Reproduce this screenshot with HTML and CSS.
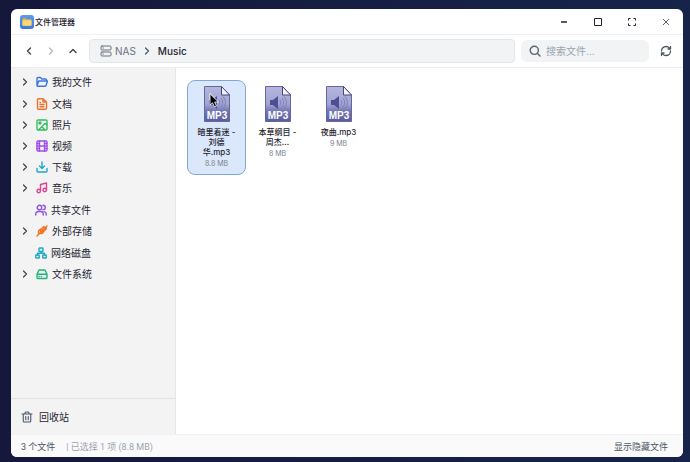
FILE: index.html
```html
<!DOCTYPE html>
<html lang="zh-CN">
<head>
    <meta charset="UTF-8">
    <title>文件管理器</title>
    <link rel="stylesheet" href="styles.css">
</head>
<body>
    <svg class="sprite" width="0" height="0">
        <defs>
            <linearGradient id="pageFill" x1="0" y1="0" x2="0" y2="1">
                <stop offset="0" stop-color="#b4b6dc"/>
                <stop offset="0.5" stop-color="#a3a5d2"/>
                <stop offset="0.7" stop-color="#7376b4"/>
                <stop offset="1" stop-color="#5a5c9c"/>
            </linearGradient>
            <linearGradient id="appFill" x1="0" y1="0" x2="0" y2="1">
                <stop offset="0" stop-color="#5b9bf0"/>
                <stop offset="1" stop-color="#3c78dc"/>
            </linearGradient>
        </defs>
        <symbol id="chevron" viewBox="0 0 12 12">
            <path d="M4.5 3 L7.5 6 L4.5 9"/>
        </symbol>
        <symbol id="page" viewBox="0 0 26 36">
            <path d="M0.5 0.5 H17.5 L25.5 9 V35.5 H0.5 Z" fill="url(#pageFill)" stroke="#6567a0"/>
            <path d="M17.5 0.5 V9 H25.5 Z" fill="#f4f4fc" stroke="#45477f"/>
            <path d="M5 14 H8 L13 10 V23 L8 19 H5 Z" fill="#4c4f94" stroke="none"/>
            <path d="M15 14 Q17 16.500 15 19 M17 12 Q20.500 16.500 17 21 M19 10.500 Q24 16.500 19 22.500" fill="none" stroke="#7c7fbb"/>
        </symbol>
    </svg>

    <div class="window">
        <header class="titlebar">
            <svg class="app-icon" viewBox="0 0 14 14">
                <rect width="14" height="14" rx="3" fill="url(#appFill)"/>
                <path d="M2.500 4 Q2.500 3.300 3.200 3.300 H5.500 L6.500 4.300 H10.800 Q11.500 4.300 11.500 5 V10 Q11.500 10.700 10.800 10.700 H3.200 Q2.500 10.700 2.500 10 Z" fill="#e9b23c"/>
                <rect x="2.500" y="5.300" width="9" height="5.400" rx="0.700" fill="#fbd978"/>
            </svg>
            <h1 class="title">文件管理器</h1>
            <div class="window-controls">
                <button type="button" aria-label="最小化"><svg viewBox="0 0 12 12"><path d="M3 6 H9" stroke-width="1.500"/></svg></button>
                <button type="button" aria-label="最大化"><svg viewBox="0 0 12 12"><path d="M2.500 2.500 H9.500 V9.500 H2.500 Z"/></svg></button>
                <button type="button" aria-label="全屏"><svg viewBox="0 0 12 12"><path d="M2.500 4.500 V2.500 H4.500 M7.500 2.500 H9.500 V4.500 M9.500 7.500 V9.500 H7.500 M4.500 9.500 H2.500 V7.500"/></svg></button>
                <button type="button" class="close" aria-label="关闭"><svg viewBox="0 0 12 12"><path d="M3 3 L9 9 M9 3 L3 9"/></svg></button>
            </div>
        </header>

        <div class="toolbar">
            <div class="nav-buttons">
                <button type="button" aria-label="后退"><svg viewBox="0 0 12 12"><path d="M7.500 3 L4.500 6 L7.500 9"/></svg></button>
                <button type="button" aria-label="前进" disabled><svg viewBox="0 0 12 12"><path d="M4.500 3 L7.500 6 L4.500 9"/></svg></button>
                <button type="button" aria-label="上一级"><svg viewBox="0 0 12 12"><path d="M3 7.500 L6 4.500 L9 7.500"/></svg></button>
            </div>
            <nav class="address">
                <svg class="server" viewBox="0 0 12 12"><rect x="1" y="1" width="10" height="4" rx="1"/><rect x="1" y="7" width="10" height="4" rx="1"/><path d="M3 3 H3.500 M3 9 H3.500"/></svg>
                <a href="#" class="crumb">NAS</a>
                <svg class="crumb-arrow"><use href="#chevron"/></svg>
                <a href="#" class="crumb current">Music</a>
            </nav>
            <label class="search">
                <svg viewBox="0 0 12 12"><circle cx="5.300" cy="5.300" r="4.100"/><path d="M8.300 8.300 L11 11"/></svg>
                <input type="text" placeholder="搜索文件..." aria-label="搜索文件">
            </label>
            <button type="button" class="refresh" aria-label="刷新">
                <svg viewBox="0 0 24 24"><path d="M3 12 a9 9 0 0 1 9-9 9.750 9.750 0 0 1 6.740 2.740 L21 8 M21 3 v5 h-5 M21 12 a9 9 0 0 1-9 9 9.750 9.750 0 0 1-6.740-2.740 L3 16 M8 16 H3 v5"/></svg>
            </button>
        </div>

        <div class="main">
            <aside class="sidebar">
                <nav class="tree">
                    <div class="group">
                        <button type="button" class="node blue"><svg class="arrow"><use href="#chevron"/></svg><svg class="icon" viewBox="0 0 24 24"><path d="M2 19 V5 a2 2 0 0 1 2-2 h5 l3 3 h7 a2 2 0 0 1 2 2 v2 M2 19 l3.500-9 H23 l-3 9 a2 2 0 0 1-2 1.500 H4 a2 2 0 0 1-2-1.500"/></svg>我的文件</button>
                    </div>
                    <div class="group">
                        <button type="button" class="node orange"><svg class="arrow"><use href="#chevron"/></svg><svg class="icon" viewBox="0 0 24 24"><path d="M14 1.500 H5 a2 2 0 0 0-2 2 v17 a2 2 0 0 0 2 2 h14 a2 2 0 0 0 2-2 V8 Z M14 2 v6 h6 M8 9 h1 M8 13 h8 M8 17.500 h8"/></svg>文档</button>
                        <button type="button" class="node green"><svg class="arrow"><use href="#chevron"/></svg><svg class="icon" viewBox="0 0 24 24"><rect x="2" y="2" width="20" height="20" rx="2"/><circle cx="8" cy="8" r="2"/><path d="M22 11 l-4-2 L5 22 M13 17 l4 4"/></svg>照片</button>
                        <button type="button" class="node purple"><svg class="arrow"><use href="#chevron"/></svg><svg class="icon" viewBox="0 0 24 24"><rect x="2" y="2" width="20" height="20" rx="2"/><path d="M7 2 v20 M17 2 v20 M2 7 h5 M2 12 h20 M2 17 h5 M17 7 h5 M17 17 h5"/></svg>视频</button>
                        <button type="button" class="node cyan"><svg class="arrow"><use href="#chevron"/></svg><svg class="icon" viewBox="0 0 24 24"><path d="M2 15 v5 a2 2 0 0 0 2 2 h16 a2 2 0 0 0 2-2 v-5 M7 10 l5 5 5-5 M12 15 V2"/></svg>下载</button>
                        <button type="button" class="node pink"><svg class="arrow"><use href="#chevron"/></svg><svg class="icon" viewBox="0 0 24 24"><path d="M9 18 V5 l12-3 v14"/><circle cx="5.500" cy="18" r="3.500"/><circle cx="17.500" cy="16" r="3.500"/></svg>音乐</button>
                    </div>
                    <div class="group">
                        <button type="button" class="node leaf violet"><svg class="icon" viewBox="0 0 24 24"><circle cx="9" cy="7" r="4.500"/><path d="M1.500 22 v-2 a5 5 0 0 1 5-5 h5 a5 5 0 0 1 5 5 v2 M16 2.500 a4.500 4.500 0 0 1 0 9 M22.500 22 v-2 a5 5 0 0 0-4-4.800"/></svg>共享文件</button>
                        <button type="button" class="node amber"><svg class="arrow"><use href="#chevron"/></svg><svg class="icon" viewBox="0 0 24 24"><path d="M2 22 L22 2 M5 18 V12 L9 8 V14 M7 17 H12 L16 13 H11 M12 10 V6 L16 3 V8 M14 10 H19 L21 6"/></svg>外部存储</button>
                    </div>
                    <div class="group">
                        <button type="button" class="node leaf teal"><svg class="icon" viewBox="0 0 24 24"><rect x="8" y="2" width="8" height="7" rx="1"/><rect x="1.500" y="16" width="7" height="6" rx="1"/><rect x="15.500" y="16" width="7" height="6" rx="1"/><path d="M5 16 v-3.500 h14 V16 M12 9 v3.500"/></svg>网络磁盘</button>
                        <button type="button" class="node emerald"><svg class="arrow"><use href="#chevron"/></svg><svg class="icon" viewBox="0 0 24 24"><path d="M22 12.500 H2 M6 4 h12 l4 8.500 V19 a2 2 0 0 1-2 2 H4 a2 2 0 0 1-2-2 v-6.500 Z M6 17 h0.500 M10.500 17 h0.500"/></svg>文件系统</button>
                    </div>
                </nav>
                <button type="button" class="trash">
                    <svg viewBox="0 0 24 24"><path d="M2 6 h20 M19.500 6 v14 a2 2 0 0 1-2 2 h-11 a2 2 0 0 1-2-2 V6 M8 6 V4 a2 2 0 0 1 2-2 h4 a2 2 0 0 1 2 2 v2 M9.500 11 v6.500 M14.500 11 v6.500"/></svg>
                    回收站
                </button>
            </aside>

            <main class="files">
                <button type="button" class="file selected">
                    <svg class="file-icon" viewBox="0 0 26 36"><use href="#page"/><text x="13" y="33" text-anchor="middle" class="file-type">MP3</text></svg>
                    <span class="file-name">暗里着迷 - 刘德华.mp3</span>
                    <span class="file-size">8.8 MB</span>
                    <svg class="pointer" viewBox="0 0 10 15"><path d="M1 1 V12 L3.500 9.800 L5.500 14 L7.500 13 L5.600 9 H9 Z" fill="#000" stroke="#fff" stroke-width="0.800"/></svg>
                </button>
                <button type="button" class="file">
                    <svg class="file-icon" viewBox="0 0 26 36"><use href="#page"/><text x="13" y="33" text-anchor="middle" class="file-type">MP3</text></svg>
                    <span class="file-name">本草纲目 - 周杰...</span>
                    <span class="file-size">8 MB</span>
                </button>
                <button type="button" class="file">
                    <svg class="file-icon" viewBox="0 0 26 36"><use href="#page"/><text x="13" y="33" text-anchor="middle" class="file-type">MP3</text></svg>
                    <span class="file-name">夜曲.mp3</span>
                    <span class="file-size">9 MB</span>
                </button>
            </main>
        </div>

        <footer class="statusbar">
            <span>3 个文件</span>
            <span class="selection">| 已选择 1 项 (8.8 MB)</span>
            <button type="button" class="toggle-hidden">显示隐藏文件</button>
        </footer>
    </div>
</body>
</html>
```
FILE: styles.css
```css
* {
    box-sizing: border-box;
}

body {
    margin: 0;
    min-height: 100vh;
    padding: 9px 7px 5px 11px;
    display: flex;
    background: linear-gradient(to right, #15183a, #16244a);
    font-family: Inter, "Noto Sans CJK SC", sans-serif;
    font-size: 10px;
    color: #1f2430;
}

button {
    border: none;
    padding: 0;
    background: none;
    font: inherit;
    color: inherit;
    cursor: pointer;
}

svg {
    flex: none;
    fill: none;
    stroke: currentColor;
    stroke-linecap: round;
    stroke-linejoin: round;
}

.sprite {
    position: absolute;
}

.window {
    flex: 1;
    display: flex;
    flex-direction: column;
    background: #fff;
    border-radius: 6px;
    overflow: hidden;
}

/* Title bar */
.titlebar {
    display: flex;
    align-items: center;
    height: 26px;
    padding-left: 9px;
    border-bottom: 1px solid #f0f0f2;
}

.app-icon {
    width: 14px;
    height: 14px;
    margin-right: 1px;
    stroke: none;
}

.title {
    flex: 1;
    margin: 0;
    font-size: 8px;
    font-weight: 500;
}

.window-controls {
    display: flex;
}

.window-controls button {
    display: flex;
    align-items: center;
    justify-content: center;
    width: 34px;
    height: 25px;
}

.window-controls svg {
    width: 12px;
    height: 12px;
    stroke-linecap: butt;
}

.window-controls .close {
    color: #5c616b;
}

/* Toolbar */
.toolbar {
    display: flex;
    align-items: center;
    height: 33px;
    padding: 0 11px 0 7px;
    border-bottom: 1px solid #ececef;
}

.nav-buttons {
    display: flex;
    margin-right: 5px;
}

.nav-buttons button {
    display: flex;
    align-items: center;
    justify-content: center;
    width: 22px;
    height: 22px;
    color: #3d424d;
}

.nav-buttons button:disabled {
    color: #b4b7be;
}

.nav-buttons svg {
    width: 12px;
    height: 12px;
    stroke-width: 1.4;
}

.address {
    flex: 1;
    display: flex;
    align-items: center;
    height: 24px;
    padding-left: 10px;
    background: #f1f3f5;
    border: 1px solid #e2e5e9;
    border-radius: 4px;
}

.server {
    width: 12px;
    height: 12px;
    margin-right: 3px;
    color: #6b7280;
}

.crumb {
    color: #6b7280;
    text-decoration: none;
}

.crumb.current {
    color: #1f2430;
    font-weight: 500;
}

.crumb-arrow {
    width: 12px;
    height: 12px;
    margin: 0 5px;
    color: #4b5563;
    stroke-width: 1.2;
}

.search {
    display: flex;
    align-items: center;
    width: 128px;
    height: 22px;
    margin-left: 6px;
    padding: 0 8px;
    background: #f1f3f5;
    border-radius: 6px;
}

.search svg {
    width: 12px;
    height: 12px;
    margin-right: 5px;
    color: #5c6370;
    stroke-width: 1.4;
}

.search input {
    flex: 1;
    min-width: 0;
    padding: 0;
    border: none;
    outline: none;
    background: none;
    font: inherit;
    color: inherit;
}

.search input::placeholder {
    color: #9ca3af;
}

.refresh {
    display: flex;
    margin-left: 11px;
    color: #4b5563;
}

.refresh svg {
    width: 12px;
    height: 12px;
    stroke-width: 2.6;
}

/* Sidebar */
.main {
    flex: 1;
    display: flex;
}

.sidebar {
    display: flex;
    flex-direction: column;
    width: 165px;
    background: #f3f3f4;
    border-right: 1px solid #e6e6e8;
}

.tree {
    flex: 1;
    display: flex;
    flex-direction: column;
    gap: 1px;
    padding-top: 3px;
}

.node {
    display: flex;
    align-items: center;
    width: 100%;
    height: 21px;
    padding-left: 8px;
}

.node.leaf {
    padding-left: 24px;
}

.arrow {
    width: 12px;
    height: 12px;
    margin-right: 5px;
    color: #3d424d;
    stroke-width: 1.2;
}

.icon {
    width: 12px;
    height: 12px;
    margin-right: 4px;
    stroke-width: 2.8;
}

.blue .icon { color: #3b76e8; }
.orange .icon { color: #f0722a; }
.green .icon { color: #35bd62; }
.purple .icon { color: #a04fe8; }
.cyan .icon { color: #1ba9c8; }
.pink .icon { color: #dc4494; }
.violet .icon { color: #8b52e6; }
.amber .icon { color: #ec7424; }
.teal .icon { color: #1cabc6; }
.emerald .icon { color: #20b37c; }

.trash {
    display: flex;
    align-items: center;
    height: 36px;
    padding-left: 10px;
    border-top: 1px solid #e2e2e5;
}

.trash svg {
    width: 12px;
    height: 12px;
    margin-right: 6px;
    color: #4b5563;
    stroke-width: 2.2;
}

/* File grid */
.files {
    flex: 1;
    display: flex;
    flex-wrap: wrap;
    align-items: flex-start;
    align-content: flex-start;
    gap: 2px;
    padding: 12px 11px;
}

.file {
    position: relative;
    display: flex;
    flex-direction: column;
    align-items: center;
    width: 59px;
    padding: 5px 8px 6px;
    border: 1px solid transparent;
    border-radius: 8px;
    text-align: center;
}

.file.selected {
    background: #dbe8fb;
    border-color: #7ea9d6;
}

.file-icon {
    width: 26px;
    height: 36px;
    margin-bottom: 5px;
    stroke-linejoin: miter;
    stroke-linecap: butt;
}

.file-type {
    font: bold 10px "Liberation Sans", sans-serif;
    fill: #fff;
    stroke: none;
}

.file-name {
    font-size: 8px;
    line-height: 10px;
    font-weight: 500;
}

.file-size {
    margin-top: 2px;
    font-size: 7px;
    line-height: 9px;
    color: #7d828c;
}

.pointer {
    position: absolute;
    top: 12px;
    left: 21px;
    width: 10px;
    height: 15px;
}

/* Status bar */
.statusbar {
    display: flex;
    align-items: center;
    height: 23px;
    padding: 0 15px 0 10px;
    background: #fafafb;
    border-top: 1px solid #f0f0f2;
    font-family: Roboto, "Noto Sans CJK SC", sans-serif;
    font-size: 9px;
    color: #4b5563;
}

.selection {
    margin-left: 11px;
    color: #9ca3af;
}

.toggle-hidden {
    margin-left: auto;
}
```
